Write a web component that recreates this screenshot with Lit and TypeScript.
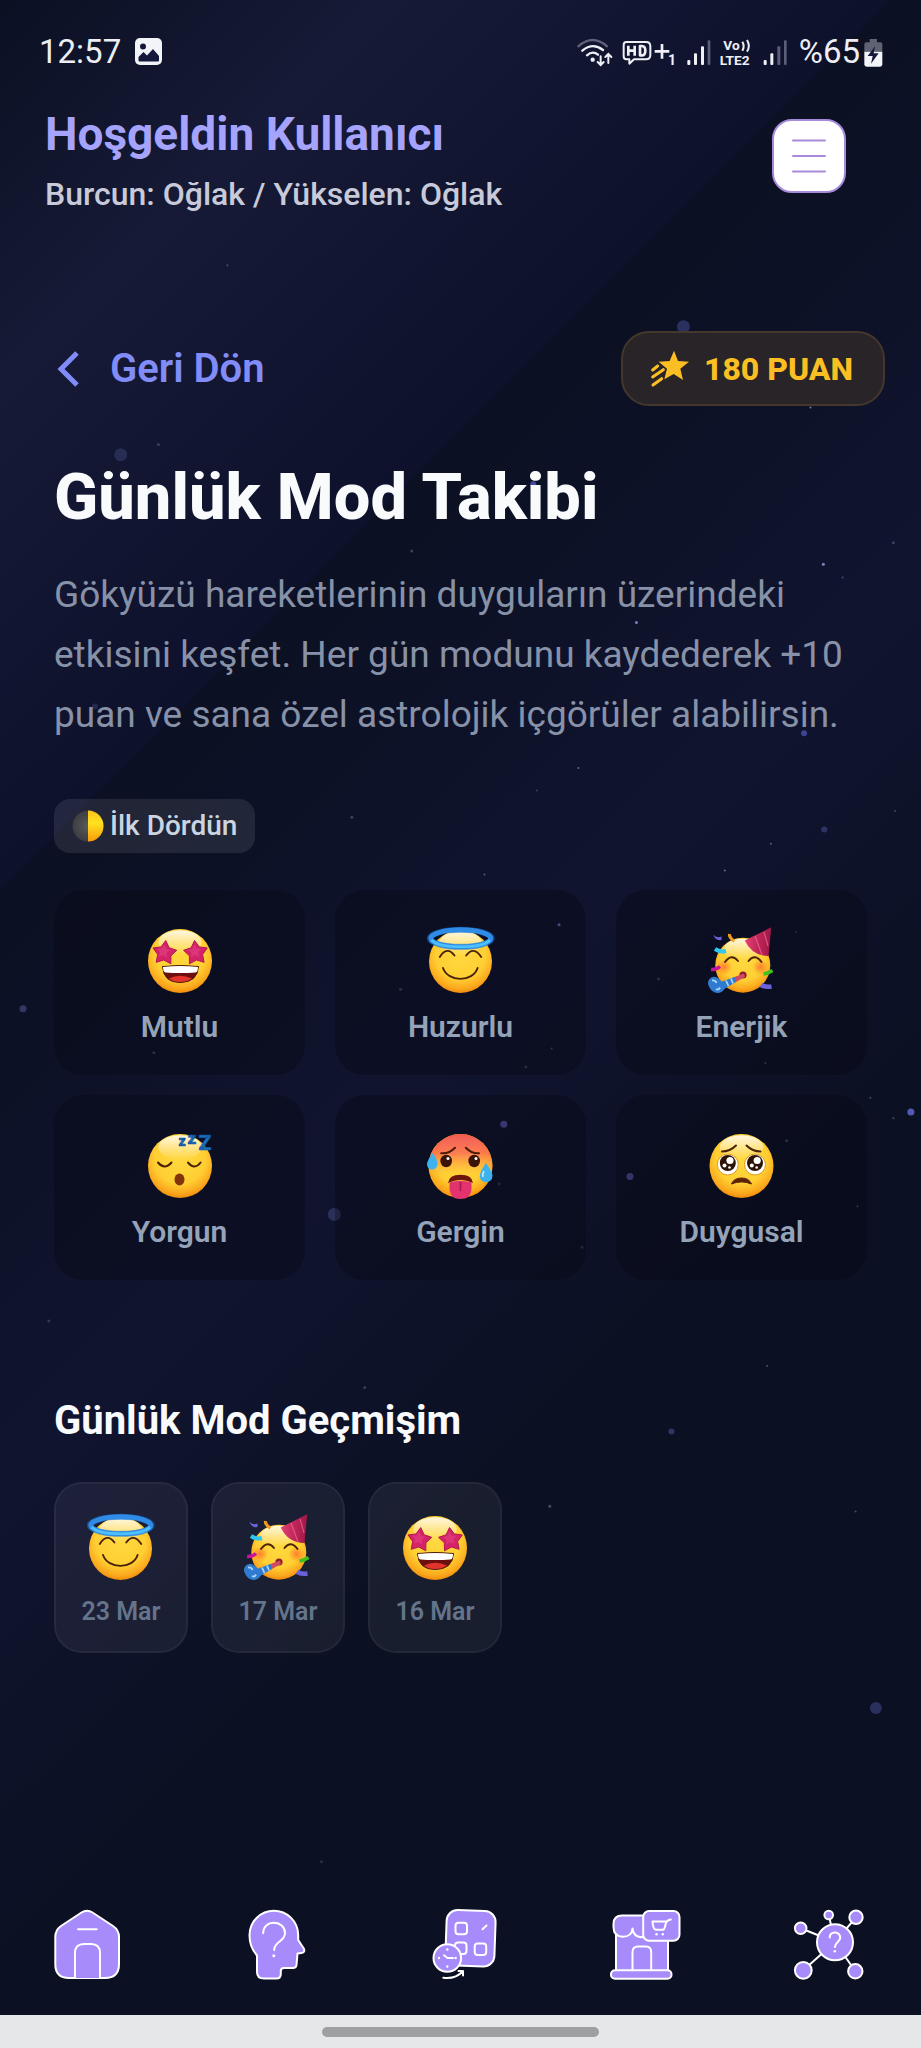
import { LitElement, html, svg, css } from "lit";
import { customElement } from "lit/decorators.js";

const starPath = (cx: number, cy: number, r: number, inner = 0.5, turn = 0) => {
  const pts: string[] = [];
  for (let i = 0; i < 10; i++) {
    const a = -Math.PI / 2 + turn + (i * Math.PI) / 5;
    const d = i % 2 ? r * inner : r;
    pts.push(`${(cx + d * Math.cos(a)).toFixed(2)},${(cy + d * Math.sin(a)).toFixed(2)}`);
  }
  return pts.join(" ");
};

const face = (id: string, cx = 35, cy = 35, r = 32) => svg`
  <defs>
    <radialGradient id=${id} cx="50%" cy="38%" r="64%">
      <stop offset="0" stop-color="#ffd93f" />
      <stop offset="0.62" stop-color="#ffcf33" />
      <stop offset="0.86" stop-color="#fba81d" />
      <stop offset="1" stop-color="#ee8408" />
    </radialGradient>
    <linearGradient id=${id + "s"} x1="0" y1="0" x2="0" y2="1">
      <stop offset="0" stop-color="#fff" stop-opacity="0.85" />
      <stop offset="1" stop-color="#fff" stop-opacity="0" />
    </linearGradient>
  </defs>
  <circle cx=${cx} cy=${cy} r=${r} fill="url(#${id})" />
  <ellipse cx=${cx} cy=${cy - r * 0.58} rx=${r * 0.68} ry=${r * 0.38} fill="url(#${id}s)" />
`;

const emojis: Record<string, unknown> = {
  starstruck: svg`
    ${face("f1", 35, 35, 32)}
    <g fill="#d3246a" stroke="#b5164f" stroke-width="1" stroke-linejoin="round">
      <polygon points=${starPath(19.5, 27, 12.5, 0.56, 0.1)} />
      <polygon points=${starPath(50.8, 27, 12.5, 0.56, -0.1)} />
    </g>
    <g fill="#e8478a" opacity="0.5">
      <polygon points=${starPath(18.5, 25.5, 7, 0.5, 0.1)} />
      <polygon points=${starPath(49.8, 25.5, 7, 0.5, -0.1)} />
    </g>
    <path d="M17.5 40.5Q35 38.5 53.5 40.5Q52.5 56.5 35 56.5Q18.5 56.5 17.5 40.5Z" fill="#6d0f0f" stroke="#4a1d08" />
    <path d="M24 52.5Q35 47 47 52.5Q42 56 35 56Q28 56 24 52.5Z" fill="#e2332d" />
    <path d="M18 41Q35 39 53 41Q53 46 50.5 46.5Q35 47.5 20.5 46.5Q18 46 18 41Z" fill="#fff" />
  `,
  halo: svg`
    ${face("f2", 34.5, 35.5, 31.5)}
    <ellipse cx="34.8" cy="12.3" rx="31" ry="8.5" fill="none" stroke="#1573d8" stroke-width="6" opacity="0.5" />
    <ellipse cx="34.8" cy="12.3" rx="30" ry="8.5" fill="none" stroke="#2f8be6" stroke-width="5" />
    <path d="M5.5 14Q12 20.8 34.8 20.8Q57.5 20.8 64 14" fill="none" stroke="#4dc0ff" stroke-width="2.6" />
    <g fill="none" stroke="#4a2306" stroke-width="1.9" stroke-linecap="round">
      <path d="M13.8 31Q21 19.5 28.5 29.5" />
      <path d="M40.2 29.5Q47.5 19.5 55.2 31" />
      <path d="M17 42C22 56.5 47 56.5 51.6 42" />
    </g>
  `,
  party: svg`
    ${face("f3", 35.8, 39.2, 27.5)}
    <defs>
      <radialGradient id="blush"><stop offset="0" stop-color="#ff6a2a" stop-opacity="0.8" /><stop offset="1" stop-color="#ff6a2a" stop-opacity="0" /></radialGradient>
      <linearGradient id="hat"><stop offset="0" stop-color="#e04272" /><stop offset="0.5" stop-color="#c2265a" /><stop offset="1" stop-color="#9f1746" /></linearGradient>
    </defs>
    <circle cx="17" cy="41" r="8" fill="url(#blush)" /><circle cx="53.5" cy="41" r="8" fill="url(#blush)" />
    <path d="M37.8 14.5L64.2 1.3L61.5 30Q45 30 37.8 14.5Z" fill="url(#hat)" />
    <path d="M48 10L55 29M57 6L61 20" stroke="#ef6c92" stroke-width="1.2" opacity="0.7" />
    <g fill="none" stroke="#4a2306" stroke-width="1.9" stroke-linecap="round">
      <path d="M18 36Q24.5 27 31 35" /><path d="M41.5 35Q48 27 54.5 36" />
    </g>
    <circle cx="36" cy="49" r="3.6" fill="#8c1d2c" />
    <path d="M37 47.5L26 51.5L28 56.5L38 51Z" fill="#d04a63" />
    <path d="M27.5 51L15 55.5L10 51.5Q5 49.5 2 53.5Q0 57 2 60.5Q5 67.5 11.5 67Q15 66.5 18 62.5L29 56Z" fill="#2f7bd0" />
    <path d="M5 54.5Q8.500 54 9.500 57M19 54.5L21.5 60M24 52.5L26 57.5M9 63Q11.500 64.500 13 61.500" fill="none" stroke="#a8d6ff" stroke-width="1.8" />
    <path d="M6.5 8.5Q9 12.5 14.5 10.5L14.5 14Q8 15 6.5 8.5Z" fill="#6a62dd" />
    <path d="M22.5 8Q22 12 27.5 15" fill="none" stroke="#ef9b20" stroke-width="3.2" />
    <path d="M8 23Q13 26.5 19 25" fill="none" stroke="#2fc6ef" stroke-width="4" />
    <path d="M4 43.5Q9 44 13 40.5" fill="none" stroke="#c9129b" stroke-width="3.6" />
    <path d="M56.5 48Q61 47.5 65.5 44.5" fill="none" stroke="#41c11f" stroke-width="3.6" />
    <path d="M54 59Q58 61.5 64.5 60.5" fill="none" stroke="#6a62dd" stroke-width="4.6" />
  `,
  sleep: svg`
    ${face("f4", 35, 35, 32)}
    <g fill="none" stroke="#4a2306" stroke-width="2" stroke-linecap="round">
      <path d="M13 31.5Q19.5 39.5 26.5 31.5" /><path d="M43 31.5Q49.5 39.5 55.6 31.5" />
    </g>
    <ellipse cx="34.5" cy="48.5" rx="5" ry="6" fill="#83330c" />
    <g class="zzz" text-anchor="middle">
      <text x="37" y="15" font-size="14">z</text><text x="47" y="12.5" font-size="17">z</text><text x="60" y="19" font-size="21">Z</text>
    </g>
  `,
  hot: svg`
    ${face("f5", 34.5, 35, 32)}
    <defs><linearGradient id="heat" x1="0" y1="0" x2="0" y2="1"><stop offset="0" stop-color="#f04a45" stop-opacity="0.9" /><stop offset="0.3" stop-color="#fb6b4e" stop-opacity="0.85" /><stop offset="0.65" stop-color="#ffae3b" stop-opacity="0" /></linearGradient></defs>
    <circle cx="34.5" cy="35" r="32" fill="url(#heat)" />
    <g fill="none" stroke="#4a1d08" stroke-width="2" stroke-linecap="round">
      <path d="M15.2 22.3Q23 23 29 16.7" /><path d="M39.8 16.7Q46 23 53 22.3" />
    </g>
    <ellipse cx="20.2" cy="30" rx="5.8" ry="6.2" fill="#3a1406" /><ellipse cx="48.2" cy="30" rx="5.8" ry="6.2" fill="#3a1406" />
    <circle cx="22" cy="27.5" r="1.5" fill="#fff" /><circle cx="50" cy="27.5" r="1.5" fill="#fff" />
    <path d="M22 52Q23 43.8 34.5 43.8Q46 43.8 47 52Q40 49 34.5 49Q29 49 22 52Z" fill="#6e160c" />
    <path d="M23.5 51.5Q34.5 48 45.5 51.5V58Q45 68 34.5 68Q24 68 23.5 58Z" fill="#e2336e" />
    <path d="M34.5 51V60" stroke="#a9184c" stroke-width="1.6" />
    <path d="M7 22Q12 30 11.5 33.5Q10.5 38.5 6 38.5Q1.5 38 1 33.5Q1 29 7 22Z" fill="#3eb2ef" />
    <path d="M60 32Q66.5 41 66.5 45Q66 51 60 51Q54 51 53.8 45Q54 40 60 32Z" fill="#3eb2ef" />
    <path d="M58 40Q56 43 57 46" stroke="#c3ecff" stroke-width="1.6" fill="none" />
  `,
  pleading: svg`
    ${face("f6", 34.5, 35, 32)}
    <g fill="#fff" stroke="#e09b1c" stroke-width="1"><circle cx="20.8" cy="33.5" r="10.5" /><circle cx="48" cy="33.5" r="10.5" /></g>
    <g fill="#2d1206"><circle cx="20.8" cy="32" r="8" /><circle cx="48" cy="32" r="8" /></g>
    <g fill="#fff"><circle cx="23" cy="29.5" r="3.6" /><circle cx="50.2" cy="29.5" r="3.6" /><circle cx="17.5" cy="34.5" r="2" /><circle cx="44.8" cy="34.5" r="2" /><circle cx="22.5" cy="36.5" r="1.3" /><circle cx="49.7" cy="36.5" r="1.3" /></g>
    <g fill="none" stroke="#4a2306" stroke-width="2" stroke-linecap="round">
      <path d="M15 20.5Q23 20.5 29 14.5" /><path d="M39.5 14.5Q45.5 20.5 53.5 20.5" />
    </g>
    <path d="M24.3 53Q27 47 34.5 47Q42 47 44.5 53Q34.5 48.8 24.3 53Z" fill="#5c2208" stroke="#5c2208" stroke-linejoin="round" />
  `,
};

const emoji = (name: string) =>
  html`<svg class="emoji" viewBox="0 0 70 70" aria-hidden="true">${emojis[name]}</svg>`;

const moods = [
  ["starstruck", "Mutlu"], ["halo", "Huzurlu"], ["party", "Enerjik"],
  ["sleep", "Yorgun"], ["hot", "Gergin"], ["pleading", "Duygusal"],
];
const history = [["halo", "23 Mar"], ["party", "17 Mar"], ["starstruck", "16 Mar"]];

/* Particles of the night sky: x %, y %, radius, colour, opacity. */
const sky: [number, number, number, string, number][] = [
  [24.7, 12.95, 1, "#8088b0", 0.5], [74.2, 15.95, 6.5, "#3a4280", 0.65], [13.1, 22.2, 6.5, "#39406f", 0.55],
  [17.2, 21.7, 1.5, "#8088b0", 0.35], [88, 19.9, 1, "#a0a8d0", 0.7], [44.7, 26.9, 1.5, "#8088b0", 0.4],
  [57.9, 23.65, 3, "#4a4fae", 0.9],
  [97, 26.5, 1.5, "#8088b0", 0.4], [89.4, 27.55, 1.5, "#98a4d8", 0.8], [91.5, 28.2, 1, "#8088b0", 0.5],
  [69.1, 30.4, 1.5, "#8088d8", 0.9], [10.3, 34.5, 3, "#39406f", 0.5], [87.3, 35.8, 3, "#4a4fae", 0.8],
  [62.8, 37.5, 1, "#98a4d8", 0.6], [58.3, 38.6, 1, "#8088b0", 0.4], [89.5, 40.5, 3, "#3a4280", 0.7],
  [83.7, 41.2, 1, "#98a4d8", 0.5], [78.7, 42.5, 1, "#98a4d8", 0.6], [38.2, 39.9, 1.5, "#8088b0", 0.4],
  [52.6, 42.7, 1, "#98a4d8", 0.5], [97.2, 39.6, 1, "#8088b0", 0.4], [60.7, 45.15, 1.5, "#7a7ee0", 0.8],
  [86.4, 45.5, 1, "#8088b0", 0.4], [71.5, 47.8, 1.5, "#8088b0", 0.4], [43.5, 48.3, 1.5, "#8088b0", 0.4],
  [59.9, 51.2, 1, "#8088b0", 0.5], [57.1, 52.1, 1.5, "#8088b0", 0.35], [83.1, 51.9, 1, "#8088b0", 0.5],
  [16.7, 51.4, 1.5, "#8088b0", 0.4], [2.5, 49.25, 3.5, "#4c5190", 0.6], [94.5, 53.6, 1, "#8088b0", 0.5],
  [97, 54.6, 1, "#8088b0", 0.5], [98.9, 54.3, 3.5, "#5b62c8", 0.9], [54.7, 54.9, 3.5, "#5a55a8", 0.9],
  [68.4, 57.45, 3.5, "#5550a0", 0.9], [85.4, 55.7, 1.5, "#8088b0", 0.4], [36.3, 59.3, 6.5, "#39406f", 0.65],
  [54.2, 57.8, 1.5, "#8088b0", 0.3], [63.2, 60.9, 1.5, "#8088b0", 0.3], [93.1, 58.9, 1, "#8088b0", 0.5],
  [5.3, 64.5, 1.5, "#8088b0", 0.3], [83.3, 66.7, 1, "#8088b0", 0.5], [39.6, 67.75, 1.5, "#8088b0", 0.35],
  [72.9, 69.9, 3, "#39406f", 0.8], [59.7, 73.55, 1.5, "#8088b0", 0.5], [92.9, 73.8, 1, "#8088b0", 0.5],
  [95.1, 83.4, 6, "#3a4280", 0.65], [34.9, 90.9, 1.5, "#8088b0", 0.25],
];

const navIcons: [string, unknown][] = [
  ["Ana sayfa", svg`
    <path d="M34.5 8.5Q40 5 45.5 8.5L66 22Q72 26 72 33V60Q72 74 58 74H22Q8.3 74 8.3 60V33Q8.3 26 14 22Z" />
    <path d="M31 25.3H49.7M28 74V49Q28 40 37 40H44Q53 40 53 49V74" />`],
  ["Rehber", svg`
    <path d="M40.8 6.7C54 6.7 65 17 65.2 31V36L70.8 44.5Q72.5 48.5 68.5 49L64.5 49.5L63.5 61Q63.2 64 60 64H51Q47.8 64 47.8 67V70Q47.8 74.5 43.5 74.5H31Q24 74.5 24 68V51.5Q16.5 43 16.5 31.5C16.5 17 28 6.7 40.8 6.7Z" />
    <path fill="none" d="M30.2 29.3C30.2 22.5 35 18.7 41 18.7C47.5 18.7 52 23.5 52 29C52 38 41.2 37 41.2 46" /><circle class="dot" cx="40.8" cy="51.7" r="1.5" />`],
  ["Takvim", svg`
    <rect x="28" y="6.5" width="49" height="55.5" rx="11" transform="rotate(2 52.5 34.5)" />
    <rect x="37.5" y="18.7" width="11.5" height="11.5" rx="3" /><rect x="37" y="38.5" width="11.5" height="11.5" rx="3" /><rect x="56.7" y="39.5" width="11.5" height="11.5" rx="3" />
    <path d="M64.5 25.3L68.5 21.5" />
    <circle cx="29.3" cy="54" r="13.8" />
    <path fill="none" d="M26 51.3L29.5 54H35" />
    <g class="dot"><circle cx="29.3" cy="45.5" r="1.2" /><circle cx="29.3" cy="62.5" r="1.2" /><circle cx="21" cy="54" r="1.2" /><circle cx="37.6" cy="54" r="1.2" /></g>
    <path fill="none" d="M25.3 73.7Q37 75.5 44.7 67.5M40.5 67H45V71.5" />`],
  ["Mağaza", svg`
    <path d="M12 28H64V67H12Z" />
    <path d="M18 11.5H45V32.5Q30 36 28.5 24.5Q27.5 32.8 19 32.8Q9.5 32.5 9.5 23V20Q9.5 11.5 18 11.5Z" />
    <path d="M28.5 66V48Q28.5 42.5 34 42.5H42Q47.2 42.5 47.2 48V66" />
    <rect x="7" y="66.3" width="60.5" height="8.5" rx="4" />
    <rect x="39.2" y="7" width="36.3" height="29.7" rx="6" />
    <path fill="none" d="M61.5 17.5H48.5Q49 25.7 52 25.7H59Q60.5 25.7 61.5 20.5Q62.5 16 66.8 15.5" /><g class="dot"><circle cx="52.5" cy="30.3" r="1.2" /><circle cx="58.8" cy="30.3" r="1.2" /></g>`],
  ["Topluluk", svg`
    <path d="M46 38L11.7 24.3M46 38L39.7 11M46 38L67 13.3M46 38L14.3 66.3M46 38L66.3 67.3" />
    <circle cx="11.7" cy="24.3" r="5.8" /><circle cx="39.7" cy="11" r="4.3" /><circle cx="67" cy="13.3" r="6.7" /><circle cx="14.3" cy="66.3" r="8.4" /><circle cx="66.3" cy="67.3" r="7.2" />
    <circle cx="46" cy="38.3" r="18" />
    <path fill="none" d="M40.7 33.5C40.7 30 43 28.5 46 28.5C49 28.5 51.3 31 51.3 33.5C51.3 38 46 38 46 43" /><circle class="dot" cx="45.8" cy="47.2" r="1.3" />`],
];

@customElement("app-root")
export class AppRoot extends LitElement {
  static styles = css`
    :host {
      display: block;
      font-family: Roboto, "Noto Sans", sans-serif;
      color: #f8fafc;
    }
    * { box-sizing: border-box; }
    h1, h2, p, ul { margin: 0; padding: 0; }
    button { font: inherit; color: inherit; border: 0; padding: 0; cursor: pointer; }
    a { color: inherit; text-decoration: none; }
    svg { display: block; flex: none; }
    .screen {
      position: relative;
      isolation: isolate;
      display: flex;
      flex-direction: column;
      min-height: 100vh;
      background: linear-gradient(135deg, #0b1023 0%, #161a36 13%, #10142f 24%, #0d112c 30%, #0b1022 30%, #10142f 50%, #0b1022 68%, #0b1022 100%);
    }
    .sky { position: absolute; inset: 0; width: 100%; height: 100%; z-index: -1; }
    .status {
      display: flex; align-items: center; justify-content: space-between;
      height: 103px; padding: 0 38px 0 39px;
      font-size: 33px; line-height: 40px; color: #eceef4;
    }
    .group { display: flex; align-items: center; gap: 8px; }
    .clock { gap: 14px; }
    .charge { gap: 4px; }
    .status text { font-family: Roboto, sans-serif; font-weight: 700; }
    .header { display: flex; justify-content: space-between; align-items: flex-start; padding: 3px 75px 0 45px; }
    .hello { font-size: 46px; line-height: 56px; font-weight: 700; color: #a5a3fb; }
    .sign { margin-top: 12px; font-size: 32px; line-height: 40px; font-weight: 500; color: #c8cad9; }
    .menu {
      display: grid; place-items: center; width: 74px; height: 74px; margin-top: 13px;
      background: #fff; border: 2px solid #a78bda; border-radius: 20px;
    }
    .toprow { display: flex; align-items: center; justify-content: space-between; margin-top: 117px; padding: 0 36px 0 54px; }
    .back { display: flex; align-items: center; gap: 28px; font-size: 40px; line-height: 48px; font-weight: 600; color: #818cf8; }
    .points {
      display: flex; align-items: center; gap: 14px; height: 75px; padding: 0 30px 0 27px;
      border: 2px solid #44372b; border-radius: 28px; background: #282428;
      font-size: 32px; line-height: 40px; font-weight: 800; color: #fbbf24;
    }
    .main { padding: 53px 54px 0; }
    .title { font-size: 65px; line-height: 76px; font-weight: 800; }
    .intro { margin-top: 30px; font-size: 37px; line-height: 60px; color: #8791a7; }
    .phase {
      display: flex; align-items: center; gap: 6px; width: fit-content; height: 54px; margin-top: 54px; padding: 0 18px;
      border-radius: 16px; background: rgba(255, 255, 255, 0.09);
      font-size: 28px; line-height: 32px; font-weight: 500; color: #cbd5e1;
    }
    .moods { display: grid; grid-template-columns: repeat(3, 1fr); gap: 20px 30px; margin-top: 37px; }
    .mood {
      display: flex; flex-direction: column; align-items: center; gap: 13px; padding: 36px 12px 30px;
      border-radius: 30px; background: rgba(6, 6, 14, 0.32);
      font-size: 30px; line-height: 36px; font-weight: 600; color: #94a3b8;
    }
    .emoji { width: 70px; height: 70px; overflow: visible; }
    .zzz { font-family: Roboto, sans-serif; font-weight: 900; fill: #1c6fc0; stroke: #0c4d92; stroke-width: 0.5; }
    .subtitle { margin-top: 117px; font-size: 40px; line-height: 48px; font-weight: 700; }
    .history { display: flex; flex-wrap: wrap; gap: 23px; margin-top: 37px; list-style: none; }
    .day {
      display: flex; flex-direction: column; align-items: center; gap: 14px; min-width: 134px; padding: 29px 20px 24px;
      border: 2px solid rgba(255, 255, 255, 0.1); border-radius: 28px; background: rgba(255, 255, 255, 0.06); background-clip: padding-box;
      font-size: 25px; line-height: 30px; font-weight: 600; color: #64748b;
    }
    .nav { display: flex; justify-content: space-between; margin-top: auto; padding: 40px 52px 31px 47px; }
    .tab svg { width: 80px; height: 80px; fill: #a78bfa; stroke: #fff; stroke-width: 2; stroke-linecap: round; stroke-linejoin: round; }
    .tab .dot { fill: #fff; stroke: none; }
    .gesture { display: grid; place-items: center; height: 33px; background: #e6e7e9; }
    .pill { width: 30%; height: 10px; border-radius: 5px; background: #9e9fa1; }
  `;

  render() {
    return html`
      <div class="screen">
        <svg class="sky" aria-hidden="true">
          ${sky.map(([x, y, r, c, o]) => svg`<circle cx="${x}%" cy="${y}%" r=${r} fill=${c} opacity=${o} />`)}
        </svg>

        <div class="status">
          <div class="group clock">
            <span>12:57</span>
            <svg width="27" height="27" viewBox="0 0 27 27"><rect width="27" height="27" rx="5" fill="#f3f4f8" /><circle cx="8" cy="8.5" r="3" fill="#14183a" /><path d="M3.5 22.5V19L8.5 14L12 17.5L18 11L24 18V22.5Q24 23.5 23 23.5H4.5Q3.5 23.5 3.5 22.5Z" fill="#14183a" /></svg>
          </div>
          <div class="group">
            <svg width="37" height="30" viewBox="56 48 111 90" fill="none" stroke="#eef0f6" stroke-width="7" stroke-linecap="round">
              <path d="M60 76Q103 38 146 76" stroke="#5c6178" /><path d="M72 89Q103 63 134 87" /><path d="M86 103Q103 88 119 101" /><circle cx="103" cy="116" r="3" />
              <path d="M127 106V131M118 123L127 132L136 123M150 126V101M141 108L150 99L159 108" stroke-width="6" />
            </svg>
            <svg width="54" height="30" viewBox="190 48 162 90" fill="none" stroke="#eef0f6" stroke-width="6" stroke-linejoin="round">
              <path d="M203 63H262Q275 63 275 76V102Q275 115 262 115H226L212 128V115H203Q195 115 195 106V72Q195 63 203 63Z" />
              <path d="M209 74V104M228 74V104M209 89H228M244 75V103H249Q260 103 260 89Q260 75 249 75Z" stroke-width="8" />
              <path d="M288 91H332M310 69V113" stroke-width="8" />
              <text x="328" y="133" font-size="42" fill="#eef0f6" stroke="none">1</text>
            </svg>
            <svg width="27" height="30" viewBox="373 48 81 90" fill="#eef0f6"><rect x="383" y="117" width="9" height="15" rx="3" /><rect x="403" y="97" width="9" height="35" rx="3" /><rect x="424" y="76" width="9" height="56" rx="3" /><rect x="444" y="58" width="8" height="74" rx="3" fill="#5a5e76" /></svg>
            <svg width="36" height="32" viewBox="474 45 108 96" fill="#eef0f6"><text x="487" y="88" font-size="41">Vo</text><path d="M544 62Q552 75 544 89M558 57Q569 75 558 92" fill="none" stroke="#eef0f6" stroke-width="6" /><text x="476" y="132" font-size="41">LTE2</text></svg>
            <svg width="28" height="30" viewBox="601 48 84 90" fill="#eef0f6"><rect x="603" y="117" width="9" height="15" rx="3" /><rect x="623" y="97" width="9" height="35" rx="3" /><rect x="644" y="76" width="9" height="56" rx="3" fill="#5a5e76" /><rect x="664" y="58" width="8" height="74" rx="3" fill="#5a5e76" /></svg>
            <div class="group charge">
              <span>%65</span>
              <svg width="19" height="30" viewBox="911 48 57 90"><path d="M928 54H950V64H960Q966 64 966 70V92H912V70Q912 64 918 64H928Z" fill="#5f6273" /><path d="M912 92H966V130Q966 137 959 137H919Q912 137 912 130Z" fill="#f3f4f8" /><path d="M944 76L922 105H937L932 128L955 97H940Z" fill="#14183a" /></svg>
            </div>
          </div>
        </div>

        <header class="header">
          <div>
            <div class="hello">Hoşgeldin Kullanıcı</div>
            <div class="sign">Burcun: Oğlak / Yükselen: Oğlak</div>
          </div>
          <button class="menu" aria-label="Menü">
            <svg width="34" height="34" viewBox="0 0 34 34" stroke="#a78bda" stroke-width="2" stroke-linecap="round"><path d="M1 1.5H33M1 17H33M1 32.5H33" /></svg>
          </button>
        </header>

        <div class="toprow">
          <a class="back" href="#">
            <svg width="28" height="36" viewBox="0 0 28 36" fill="none" stroke="#818cf8" stroke-width="5"><path d="M23 2L7 18L23 34" /></svg>
            Geri Dön
          </a>
          <div class="points">
            <svg width="40" height="38" viewBox="150 118 120 114" fill="#fbbf24">
              <path d="M222 120L234 151L267 153L241 174L249 208L221 190L193 206L201 174L176 153L209 151Z" />
              <path d="M158 178L173 166M158 199L190 177M159 223L185 204" stroke="#fbbf24" stroke-width="9" stroke-linecap="round" />
            </svg>
            180 PUAN
          </div>
        </div>

        <main class="main">
          <h1 class="title">Günlük Mod Takibi</h1>
          <p class="intro">Gökyüzü hareketlerinin duyguların üzerindeki etkisini keşfet. Her gün modunu kaydederek +10 puan ve sana özel astrolojik içgörüler alabilirsin.</p>
          <div class="phase">
            <svg width="32" height="32" viewBox="0 0 32 32">
              <defs>
                <linearGradient id="lit" x1="0" y1="0" x2="0" y2="1"><stop offset="0" stop-color="#ffc21a" /><stop offset="0.4" stop-color="#ffe21f" /><stop offset="1" stop-color="#f79a0a" /></linearGradient>
                <radialGradient id="dark"><stop offset="0" stop-color="#5a5a5a" /><stop offset="1" stop-color="#3c3d42" /></radialGradient>
              </defs>
              <circle cx="16" cy="16" r="15.5" fill="url(#dark)" /><path d="M16 0.5A15.5 15.5 0 0 1 16 31.5Z" fill="url(#lit)" />
            </svg>
            İlk Dördün
          </div>
          <div class="moods">
            ${moods.map(([e, label]) => html`<button class="mood">${emoji(e)}<span>${label}</span></button>`)}
          </div>
          <h2 class="subtitle">Günlük Mod Geçmişim</h2>
          <ul class="history">
            ${history.map(([e, date]) => html`<li class="day">${emoji(e)}<span>${date}</span></li>`)}
          </ul>
        </main>

        <nav class="nav">
          ${navIcons.map(([label, icon]) => html`<a class="tab" href="#" aria-label=${label}><svg viewBox="0 0 80 80">${icon}</svg></a>`)}
        </nav>
        <div class="gesture"><div class="pill"></div></div>
      </div>
    `;
  }
}
